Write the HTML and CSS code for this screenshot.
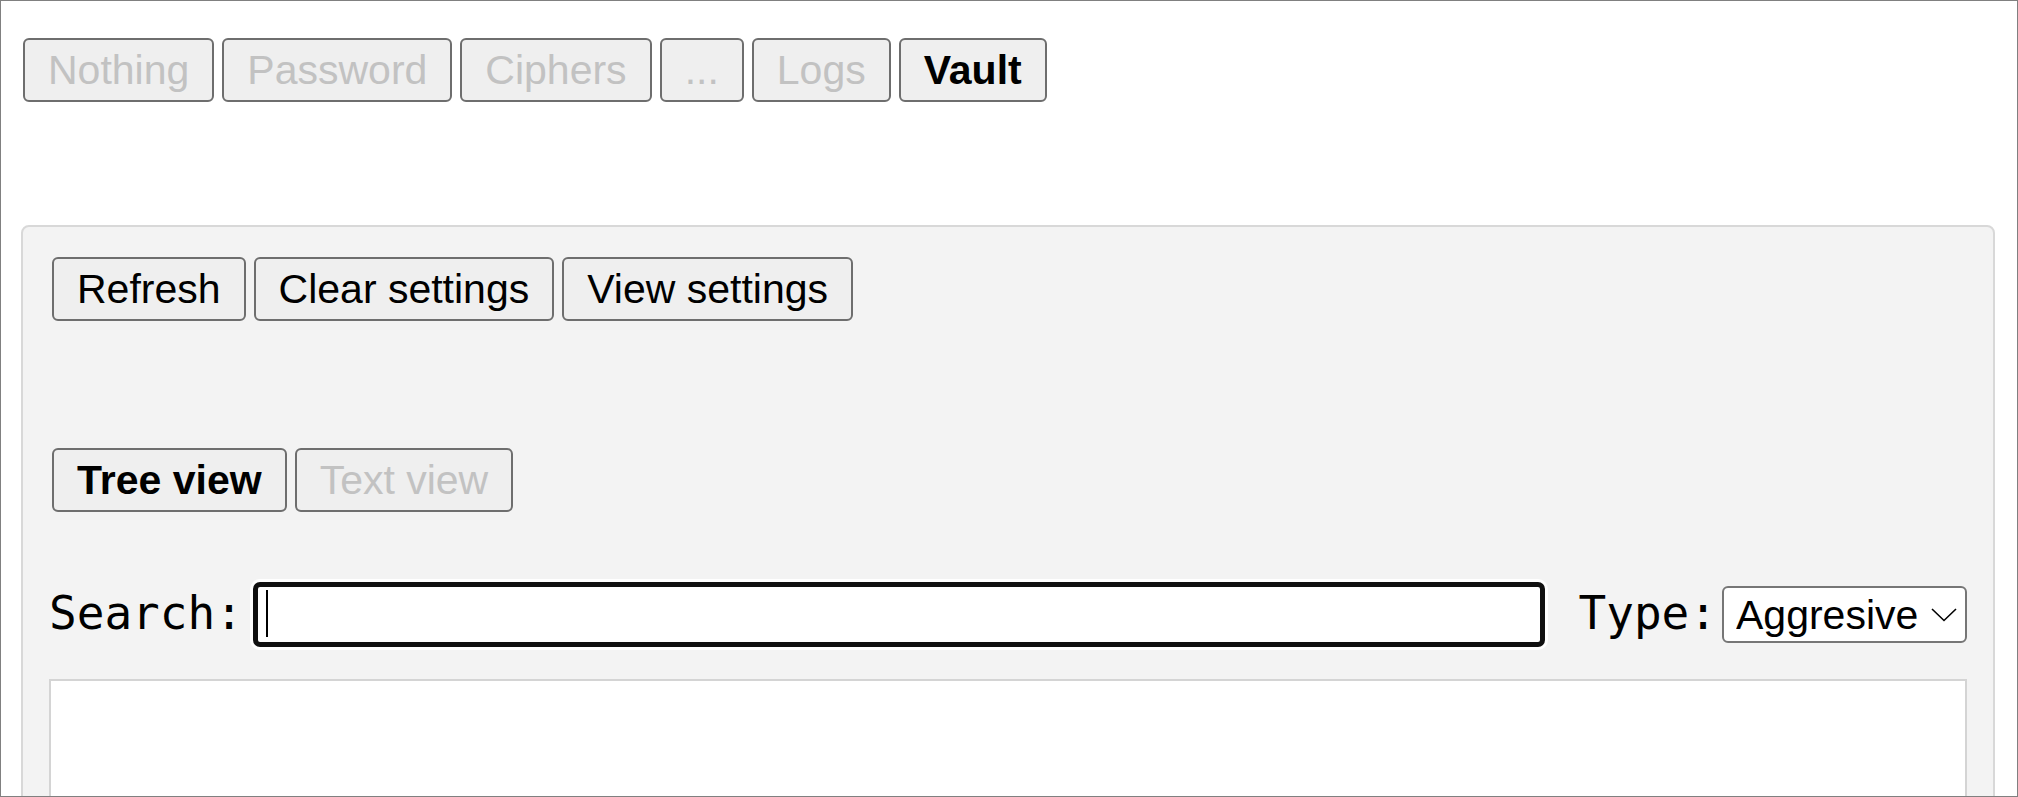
FILE: index.html
```html
<!DOCTYPE html>
<html lang="en">
<head>
<meta charset="utf-8">
<title>Vault</title>
<link rel="stylesheet" href="styles.css">
</head>
<body>
<div class="frame">
  <nav class="topnav">
    <button class="btn dim">Nothing</button>
    <button class="btn dim">Password</button>
    <button class="btn dim">Ciphers</button>
    <button class="btn dim">...</button>
    <button class="btn dim">Logs</button>
    <button class="btn active">Vault</button>
  </nav>
  <section class="panel">
    <div class="btnrow">
      <button class="btn">Refresh</button>
      <button class="btn">Clear settings</button>
      <button class="btn">View settings</button>
    </div>
    <div class="btnrow views">
      <button class="btn active">Tree view</button>
      <button class="btn dim">Text view</button>
    </div>
    <div class="searchrow">
      <label class="lbl" for="q">Search:</label>
      <span class="inputwrap">
        <input id="q" class="search" type="text">
        <span class="caret"></span>
      </span>
      <label class="lbl type" for="t">Type:</label>
      <span class="selectwrap">
        <select id="t" class="select">
          <option>Aggresive</option>
        </select>
        <svg class="chev" width="26" height="14" viewBox="0 0 26 14"><path d="M1 1 L13 12.5 L25 1" fill="none" stroke="#000" stroke-width="1.6"/></svg>
      </span>
    </div>
    <div class="tree"></div>
  </section>
</div>
</body>
</html>
```
FILE: styles.css
```css
html, body {
  margin: 0;
  padding: 0;
  background: #ffffff;
}
.frame {
  box-sizing: border-box;
  height: 100vh;
  border: 1px solid #808080;
  overflow: hidden;
  font-family: "Liberation Sans", Arial, sans-serif;
}
.topnav {
  display: flex;
  gap: 8px;
  padding: 37px 0 0 22px;
}
.btn {
  font-family: "Liberation Sans", Arial, sans-serif;
  font-size: 41px;
  line-height: 47px;
  height: 64px;
  box-sizing: border-box;
  padding: 7px 23px 6px;
  margin: 0;
  border: 2px solid #6e6e6e;
  border-radius: 6px;
  background: #efefef;
  color: #000000;
  white-space: nowrap;
}
.btn.dim {
  color: #c2c2c2;
}
.btn.active {
  font-weight: bold;
}
.panel {
  margin: 123px 22px 0 20px;
  border: 2px solid #d8d8d8;
  border-radius: 8px;
  background: #f3f3f3;
  padding: 30px 26px 0;
  height: 700px;
}
.btnrow {
  display: flex;
  gap: 8px;
  padding-left: 3px;
}
.views {
  margin-top: 127px;
}
.searchrow {
  display: flex;
  align-items: center;
  margin-top: 70px;
}
.lbl {
  font-family: "DejaVu Sans Mono", monospace;
  font-size: 46px;
  color: #000000;
  white-space: nowrap;
  padding-bottom: 4px;
}
.inputwrap {
  position: relative;
  flex: 1;
  display: flex;
  margin: 0 34px 0 10px;
}
.search {
  flex: 1;
  box-sizing: border-box;
  height: 65px;
  margin: 0;
  border: 5px solid #101010;
  border-radius: 7px;
  background: #ffffff;
  box-shadow: 0 0 0 3px #ffffff;
  outline: none;
  padding: 0 8px;
  font-size: 30px;
}
.caret {
  position: absolute;
  left: 13px;
  top: 8px;
  width: 2px;
  height: 47px;
  background: #000000;
}
.type {
  margin-right: 5px;
}
.selectwrap {
  position: relative;
  display: flex;
}
.select {
  appearance: none;
  -webkit-appearance: none;
  box-sizing: border-box;
  width: 245px;
  height: 57px;
  margin: 0;
  border: 2px solid #767676;
  border-radius: 6px;
  background: #ffffff;
  padding: 0 0 0 12px;
  font-family: "Liberation Sans", Arial, sans-serif;
  font-size: 41px;
  color: #000000;
}
.chev {
  position: absolute;
  right: 10px;
  top: 22px;
  pointer-events: none;
}
.tree {
  margin-top: 32px;
  height: 400px;
  border: 2px solid #d4d4d4;
  background: #ffffff;
}
```
